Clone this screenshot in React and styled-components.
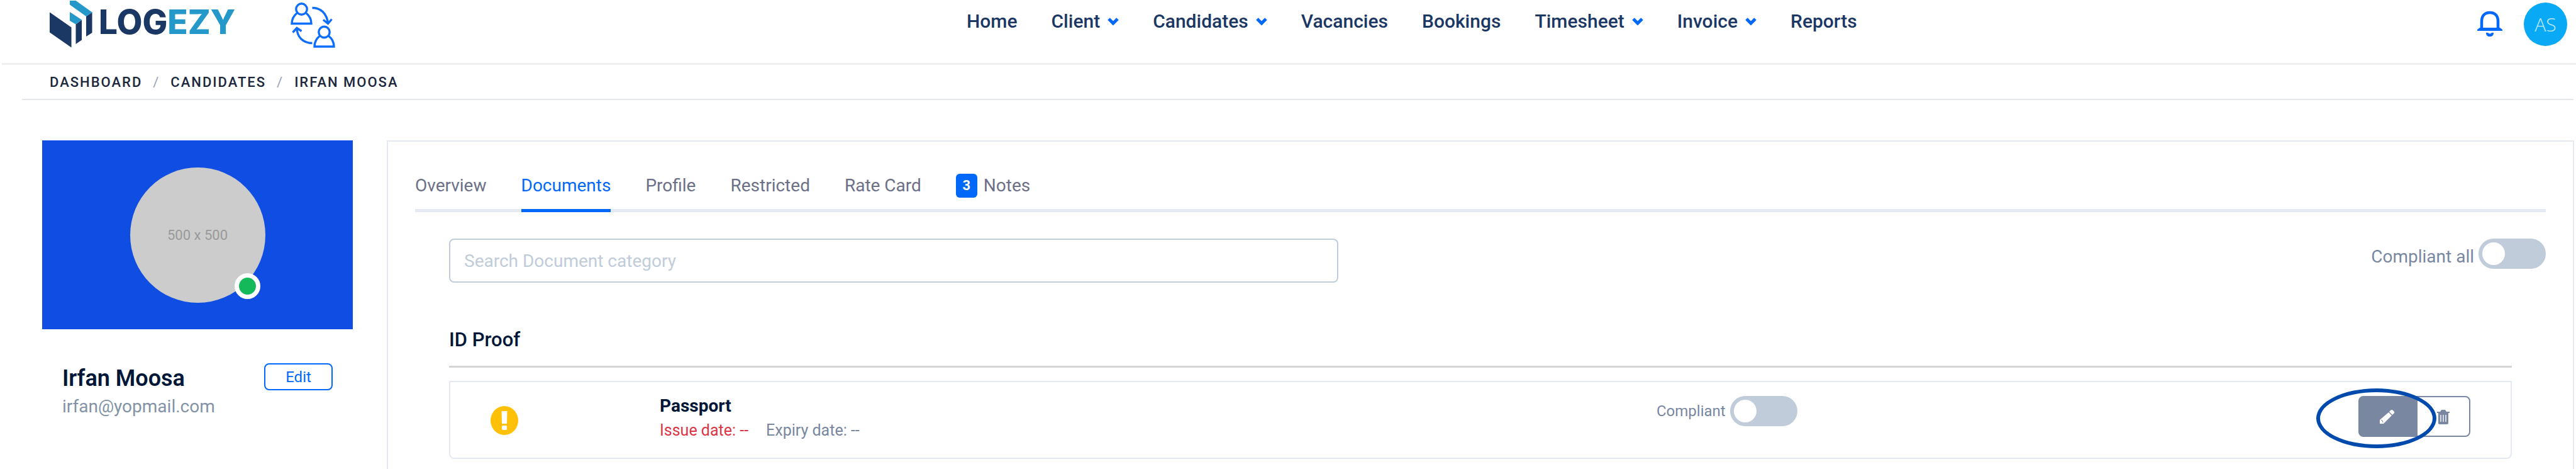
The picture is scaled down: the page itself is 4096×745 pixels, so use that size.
import React, { useState } from 'react';
import styled, { createGlobalStyle } from 'styled-components';

const menuItems = [
  { label: 'Home' },
  { label: 'Client', hasMenu: true },
  { label: 'Candidates', hasMenu: true },
  { label: 'Vacancies' },
  { label: 'Bookings' },
  { label: 'Timesheet', hasMenu: true },
  { label: 'Invoice', hasMenu: true },
  { label: 'Reports' },
];

const tabs = [
  { label: 'Overview' },
  { label: 'Documents' },
  { label: 'Profile' },
  { label: 'Restricted' },
  { label: 'Rate Card' },
  { label: 'Notes', count: 3 },
];

const LogoMark = () => (
  <svg width="68" height="75" viewBox="0 0 68 75" aria-hidden="true">
    <path d="M0 18.5L34.5 42.5V74.5L0 50.5Z" fill="#1b3764" />
    <path d="M41.5 37.5L51 30.5V62.5L41.5 69Z" fill="#1b3764" />
    <path d="M58 25L67.5 18.5V51L58 57Z" fill="#1b3764" />
    <path d="M32 18L51 30.5L41.5 37.5L32 32Z" fill="#2499c9" />
    <path d="M32 0H41.5L67.5 18.5L58 25L32 6.5Z" fill="#2499c9" />
  </svg>
);

const SwapUsersIcon = () => (
  <svg width="72" height="78" viewBox="0 0 72 78" fill="none" stroke="#0d6efd" strokeWidth="3.4" aria-hidden="true">
    <circle cx="17.5" cy="15.5" r="8.7" />
    <path d="M10.5 21.5C5 26 2 31 2 38.5H33C33 31 30 26 24.5 21.5" />
    <circle cx="53.5" cy="52" r="8.7" />
    <path d="M46.5 58C41 62.5 38 67.5 38 75H69C69 67.5 66 62.5 60.5 58" />
    <path d="M34.5 13.5C48 13.5 57.5 22 59.5 38M52 32.5L59.5 38.5L65.5 31.5" />
    <path d="M34.5 69.5C20 69.5 10.5 60 10 46M3.5 52.5L10 45.5L17.5 50.5" />
  </svg>
);

const BellIcon = () => (
  <svg width="40" height="42" viewBox="0 0 40 42" aria-hidden="true">
    <path d="M7 29V17C7 8 12 3 20 3S33 8 33 17V29" fill="none" stroke="#0168fa" strokeWidth="4.5" />
    <path d="M0 32V30L4 27H36L40 30V32Z" fill="#0168fa" />
    <path d="M14 35H17Q20 38 23 35H26C26 39 24 41 20 41S14 39 14 35Z" fill="#0168fa" />
  </svg>
);

const ChevronIcon = () => (
  <svg width="18" height="13" viewBox="0 0 18 13" aria-hidden="true">
    <path d="M2 2L9 9L16 2" fill="none" stroke="#0168fa" strokeWidth="5" />
  </svg>
);

const WarningIcon = () => (
  <svg width="44" height="46" viewBox="0 0 44 46" role="img" aria-label="Warning">
    <ellipse cx="22" cy="23" rx="22" ry="23" fill="#ffc107" />
    <path d="M17.5 8H26.5L26 28H18Z" fill="#fff" />
    <rect x="18" y="31" width="8" height="7" rx="2" fill="#fff" />
  </svg>
);

const PencilIcon = () => (
  <svg width="24" height="24" viewBox="0 0 24 24" aria-hidden="true">
    <path d="M0 23V17L14 5L19 10L6 23Z" fill="#fff" />
    <path d="M15 4L17 2Q19 0 21 2L23 4Q24 6 22 7L20 9Z" fill="#fff" />
    <path d="M2 17L4 18L5 21" fill="none" stroke="#7987a1" />
  </svg>
);

const TrashIcon = () => (
  <svg width="20" height="24" viewBox="0 0 20 24" aria-hidden="true">
    <path d="M0 4H5L7 1H13L15 4H20V6H0Z" fill="#7987a1" />
    <path d="M2 6H18V22Q18 24 16 24H4Q2 24 2 22Z" fill="#7987a1" />
    <path d="M6 9V20M10 9V20M14 9V20" stroke="#d5dae4" strokeWidth="2" />
  </svg>
);

const Toggle = ({ id, label, large }) => {
  const [checked, setChecked] = useState(false);

  return (
    <ToggleGroup>
      <ToggleLabel htmlFor={id} $large={large}>
        {label}
      </ToggleLabel>
      <Switch id={id} type="checkbox" role="switch" checked={checked} onChange={() => setChecked(!checked)} />
    </ToggleGroup>
  );
};

const App = () => {
  const [activeTab, setActiveTab] = useState('Documents');
  const [search, setSearch] = useState('');

  return (
    <Page>
      <GlobalStyle />
      <Header>
        <HeaderSide>
          <Logo href="#">
            <LogoMark />
            <LogoText>
              LOG<span>EZY</span>
            </LogoText>
          </Logo>
          <IconButton aria-label="Switch user">
            <SwapUsersIcon />
          </IconButton>
        </HeaderSide>
        <Menu>
          {menuItems.map((item) => (
            <MenuLink href="#" key={item.label}>
              {item.label}
              {item.hasMenu && <ChevronIcon />}
            </MenuLink>
          ))}
        </Menu>
        <HeaderSide $end>
          <IconButton aria-label="Notifications">
            <BellIcon />
          </IconButton>
          <UserButton>AS</UserButton>
        </HeaderSide>
      </Header>

      <Breadcrumb aria-label="Breadcrumb">
        <a href="#">Dashboard</a>
        <span>/</span>
        <a href="#">Candidates</a>
        <span>/</span>
        <a href="#">Irfan Moosa</a>
      </Breadcrumb>

      <Main>
        <Sidebar>
          <Cover>
            <Avatar>
              500 x 500
              <Status />
            </Avatar>
          </Cover>
          <Profile>
            <div>
              <Name>Irfan Moosa</Name>
              <Email>irfan@yopmail.com</Email>
            </div>
            <EditButton>Edit</EditButton>
          </Profile>
        </Sidebar>

        <Panel>
          <TabList role="tablist">
            {tabs.map((tab) => (
              <Tab
                key={tab.label}
                role="tab"
                aria-selected={activeTab === tab.label}
                $active={activeTab === tab.label}
                onClick={() => setActiveTab(tab.label)}
              >
                {tab.count && <Badge>{tab.count}</Badge>}
                {tab.label}
              </Tab>
            ))}
          </TabList>

          <Toolbar>
            <SearchInput
              type="text"
              aria-label="Search Document category"
              placeholder="Search Document category"
              value={search}
              onChange={(e) => setSearch(e.target.value)}
            />
            <Toggle id="compliant-all" label="Compliant all" large />
          </Toolbar>

          <Category>
            <CategoryTitle>ID Proof</CategoryTitle>
            <DocumentCard>
              <WarningIcon />
              <DocumentInfo>
                <DocumentName>Passport</DocumentName>
                <Dates>
                  <DateText $missing>Issue date: --</DateText>
                  <DateText>Expiry date: --</DateText>
                </Dates>
              </DocumentInfo>
              <Toggle id="compliant" label="Compliant" />
              <Actions>
                <ActionButton $filled aria-label="Edit document">
                  <PencilIcon />
                </ActionButton>
                <ActionButton aria-label="Delete document">
                  <TrashIcon />
                </ActionButton>
                <Highlight />
              </Actions>
            </DocumentCard>
          </Category>
        </Panel>
      </Main>
    </Page>
  );
};

export default App;

// ==========================
// Styled Components
// ==========================

const GlobalStyle = createGlobalStyle`
  * {
    box-sizing: border-box;
  }

  body {
    margin: 0;
    background: #fff;
    color: #001737;
    font-family: Roboto, sans-serif;
  }

  a {
    color: inherit;
    text-decoration: none;
  }

  button,
  input {
    font-family: inherit;
  }

  button {
    cursor: pointer;
  }
`;

const Page = styled.div`
  min-height: 100vh;
  display: flex;
  flex-direction: column;
`;

const Header = styled.header`
  height: 103px;
  margin-left: 3px;
  padding: 0 14px 0 76px;
  display: grid;
  grid-template-columns: 9fr auto 7fr;
  align-items: start;
  border-bottom: 3px solid #efefef;
`;

const HeaderSide = styled.div`
  height: 76px;
  display: flex;
  align-items: center;
  justify-content: ${({ $end }) => ($end ? 'flex-end' : 'flex-start')};
  gap: ${({ $end }) => ($end ? '34px' : '88px')};
`;

const Logo = styled.a`
  display: flex;
  align-items: flex-start;
  gap: 10px;
`;

const LogoText = styled.span`
  color: #1b3764;
  font-family: Inter, sans-serif;
  font-size: 53px;
  font-weight: 800;
  line-height: 68px;

  span {
    color: #2499c9;
  }
`;

const IconButton = styled.button`
  display: flex;
  padding: 0;
  border: 0;
  background: none;
`;

const Menu = styled.nav`
  display: flex;
  gap: 54px;
  padding: 16px 0 0 6px;
`;

const MenuLink = styled.a`
  display: flex;
  align-items: center;
  gap: 12px;
  color: #1b3764;
  font-size: 30px;
  font-weight: 500;
  line-height: 36px;
`;

const UserButton = styled.button`
  width: 69px;
  height: 69px;
  padding: 0;
  border: 0;
  border-radius: 50%;
  background: #0aa9f5;
  color: #c4ebfd;
  font-family: 'Open Sans', sans-serif;
  font-size: 30px;
  font-weight: 300;
`;

const Breadcrumb = styled.nav`
  height: 56px;
  margin: 0 4px 0 35px;
  padding-left: 44px;
  display: flex;
  align-items: center;
  gap: 17px;
  border-bottom: 2px solid #e4e7f0;
  color: #1c273c;
  font-size: 22px;
  font-weight: 500;
  letter-spacing: 2px;
  text-transform: uppercase;

  span {
    color: #97a3b9;
    font-weight: 400;
  }
`;

const Main = styled.main`
  flex: 1;
  display: flex;
  align-items: stretch;
  gap: 54px;
  padding: 64px 3px 0 67px;
`;

const Sidebar = styled.aside`
  width: 494px;
  flex-shrink: 0;
`;

const Cover = styled.div`
  height: 300px;
  display: flex;
  align-items: center;
  justify-content: center;
  background: #104de2;
`;

const Avatar = styled.div`
  position: relative;
  width: 215px;
  height: 215px;
  display: flex;
  align-items: center;
  justify-content: center;
  border-radius: 50%;
  background: #ccc;
  color: #999;
  font-size: 22px;
`;

const Status = styled.span`
  position: absolute;
  right: 8px;
  bottom: 6px;
  width: 41px;
  height: 41px;
  border: 7px solid #fff;
  border-radius: 50%;
  background: #14b95a;
`;

const Profile = styled.div`
  display: flex;
  align-items: flex-start;
  justify-content: space-between;
  padding: 54px 32px 0;
`;

const Name = styled.h1`
  margin: 0;
  font-size: 36px;
  font-weight: 600;
  line-height: 48px;
`;

const Email = styled.p`
  margin: 0;
  color: #8392a5;
  font-size: 28px;
  line-height: 42px;
`;

const EditButton = styled.button`
  width: 109px;
  height: 43px;
  padding: 0;
  border: 2px solid #0168fa;
  border-radius: 8px;
  background: #fff;
  color: #0168fa;
  font-size: 24px;
`;

const Panel = styled.section`
  flex: 1;
  padding: 42px 43px 0;
  border: 2px solid #e5e9f2;
  border-bottom: 0;
`;

const TabList = styled.div`
  display: flex;
  gap: 55px;
  height: 70px;
  border-bottom: 5px solid #e5e9f2;
`;

const Tab = styled.button`
  display: flex;
  align-items: center;
  gap: 10px;
  height: 70px;
  padding: 0 0 10px;
  border: 0;
  border-bottom: 5px solid ${({ $active }) => ($active ? '#0168fa' : 'transparent')};
  background: none;
  color: ${({ $active }) => ($active ? '#0168fa' : '#6c7087')};
  font-size: 28px;
`;

const Badge = styled.span`
  width: 34px;
  border-radius: 6px;
  background: #0168fa;
  color: #fff;
  font-size: 22px;
  font-weight: 700;
  line-height: 38px;
`;

const Toolbar = styled.div`
  display: flex;
  align-items: flex-start;
  justify-content: space-between;
  padding: 42px 0 0 54px;
`;

const SearchInput = styled.input`
  width: 42.4%;
  height: 70px;
  padding: 0 22px;
  border: 2px solid #c0ccda;
  border-radius: 8px;
  background: #fff;
  color: #001737;
  font-size: 28px;

  &::placeholder {
    color: #c0ccda;
  }
`;

const ToggleGroup = styled.div`
  display: flex;
  align-items: center;
  gap: 7px;
`;

const ToggleLabel = styled.label`
  padding-top: ${({ $large }) => ($large ? '8px' : '0')};
  color: #7987a1;
  font-size: ${({ $large }) => ($large ? '28px' : '24px')};
`;

const Switch = styled.input`
  appearance: none;
  width: 107px;
  height: 48px;
  margin: 0;
  padding: 6px;
  border-radius: 24px;
  background: #c0ccda;
  cursor: pointer;

  &::before {
    content: '';
    display: block;
    width: 36px;
    height: 36px;
    border-radius: 50%;
    background: #fff;
  }

  &:checked {
    background: #0168fa;
  }

  &:checked::before {
    margin-left: auto;
  }
`;

const Category = styled.div`
  padding: 70px 54px 0;
`;

const CategoryTitle = styled.h2`
  margin: 0 0 21px;
  padding-bottom: 20px;
  border-bottom: 3px solid #d4d4d4;
  font-size: 31px;
  font-weight: 500;
  line-height: 42px;
`;

const DocumentCard = styled.div`
  height: 124px;
  display: grid;
  grid-template-columns: 269px 1585px 1fr auto;
  align-items: start;
  padding: 22px 64px 0;
  border: 2px solid #e5e9f2;
  border-radius: 0 0 8px 8px;

  > svg {
    margin-top: 16px;
  }
`;

const DocumentInfo = styled.div`
  line-height: 46px;
`;

const DocumentName = styled.h3`
  margin: 0;
  font-size: 28px;
  font-weight: 700;
  line-height: 32px;
`;

const Dates = styled.div`
  display: flex;
  gap: 28px;
`;

const DateText = styled.span`
  color: ${({ $missing }) => ($missing ? '#dc3545' : '#7987a1')};
  font-size: 25px;
`;

const Actions = styled.div`
  position: relative;
  display: flex;
`;

const ActionButton = styled.button`
  width: ${({ $filled }) => ($filled ? '92px' : '86px')};
  height: 65px;
  display: flex;
  align-items: center;
  justify-content: center;
  padding: 0;
  border: 2px solid #7987a1;
  border-radius: ${({ $filled }) => ($filled ? '8px 0 0 8px' : '0 8px 8px 0')};
  background: ${({ $filled }) => ($filled ? '#7987a1' : '#fff')};
`;

const Highlight = styled.span`
  position: absolute;
  top: -12px;
  left: -67px;
  width: 191px;
  height: 95px;
  border: 6px solid #004aad;
  border-radius: 50%;
  pointer-events: none;
`;
